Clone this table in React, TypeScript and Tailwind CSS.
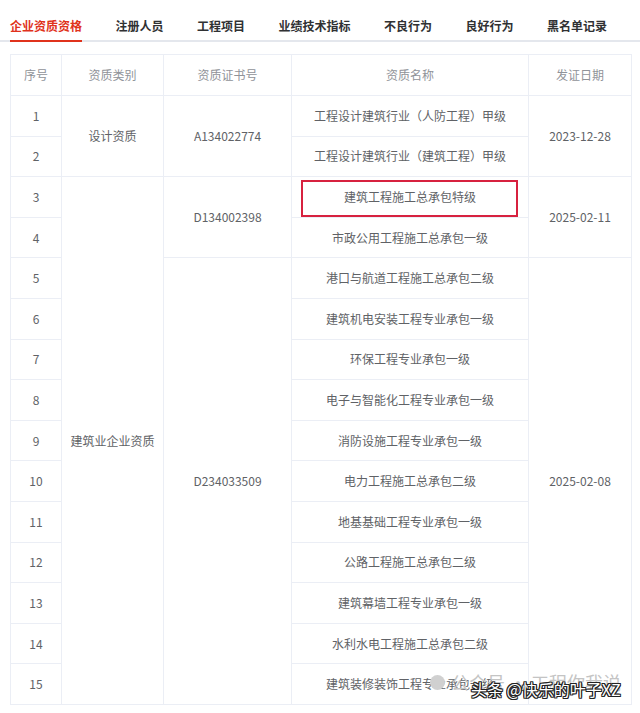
const tabs = ['企业资质资格', '注册人员', '工程项目', '业绩技术指标', '不良行为', '良好行为', '黑名单记录'];

const names = [
  '工程设计建筑行业（人防工程）甲级',
  '工程设计建筑行业（建筑工程）甲级',
  '建筑工程施工总承包特级',
  '市政公用工程施工总承包一级',
  '港口与航道工程施工总承包二级',
  '建筑机电安装工程专业承包一级',
  '环保工程专业承包一级',
  '电子与智能化工程专业承包一级',
  '消防设施工程专业承包一级',
  '电力工程施工总承包二级',
  '地基基础工程专业承包一级',
  '公路工程施工总承包二级',
  '建筑幕墙工程专业承包一级',
  '水利水电工程施工总承包二级',
  '建筑装修装饰工程专业承包一级',
];

const cell = 'border border-[#ebeef5] text-center align-middle';

export default function App() {
  return (
    <div
      className="relative h-[713px] w-[640px] overflow-hidden bg-white"
      style={{ fontFamily: '"Noto Sans CJK SC", "Noto Sans", sans-serif' }}
    >
      <div className="flex border-b-2 border-[#e4e7ed] pl-[10px]">
        <div className="flex gap-[33.5px] -mb-[2px]">
          {tabs.map((t, i) => (
            <div
              key={t}
              className={`border-b-2 pt-[18px] pb-[6px] text-[12px] leading-[16px] font-semibold ${
                i === 0 ? 'border-[#e0321c] text-[#e0321c]' : 'border-transparent text-[#303133]'
              }`}
            >
              {t}
            </div>
          ))}
        </div>
      </div>

      <table className="mt-[12px] ml-[10px] w-[621px] table-fixed border-collapse text-[12px] text-[#606266]">
        <colgroup>
          <col className="w-[51px]" />
          <col className="w-[102px]" />
          <col className="w-[128px]" />
          <col className="w-[237px]" />
          <col className="w-[103px]" />
        </colgroup>
        <thead>
          <tr className="h-[41px] text-[12px] text-[#909399]">
            <th className={`${cell} font-normal`}>序号</th>
            <th className={`${cell} font-normal`}>资质类别</th>
            <th className={`${cell} font-normal`}>资质证书号</th>
            <th className={`${cell} font-normal`}>资质名称</th>
            <th className={`${cell} font-normal`}>发证日期</th>
          </tr>
        </thead>
        <tbody>
          {names.map((name, i) => (
            <tr key={name} className="h-[40.6px]">
              <td className={cell}>{i + 1}</td>
              {i === 0 && (
                <td rowSpan={2} className={cell}>
                  设计资质
                </td>
              )}
              {i === 2 && (
                <td rowSpan={13} className={cell}>
                  建筑业企业资质
                </td>
              )}
              {i === 0 && (
                <td rowSpan={2} className={cell}>
                  A134022774
                </td>
              )}
              {i === 2 && (
                <td rowSpan={2} className={cell}>
                  D134002398
                </td>
              )}
              {i === 4 && (
                <td rowSpan={11} className={cell}>
                  D234033509
                </td>
              )}
              <td className={`${cell} relative`}>
                {name}
                {i === 2 && (
                  <span className="absolute top-[3px] right-[10px] bottom-0 left-[9px] border-2 border-[#d7213f]" />
                )}
              </td>
              {i === 0 && (
                <td rowSpan={2} className={cell}>
                  2023-12-28
                </td>
              )}
              {i === 2 && (
                <td rowSpan={2} className={cell}>
                  2025-02-11
                </td>
              )}
              {i === 4 && (
                <td rowSpan={11} className={cell}>
                  2025-02-08
                </td>
              )}
            </tr>
          ))}
        </tbody>
      </table>

      {/* faint source watermark */}
      <div className="absolute top-[670px] left-[430px] flex items-center gap-[6px] text-[18px] leading-[24px] text-[#c4c4c4]">
        <span className="h-[15px] w-[15px] rounded-full bg-[#d0d0d0]" />
        <span>公众号 · 工程你我说</span>
      </div>

      {/* toutiao watermark */}
      <div className="absolute top-[678px] left-[471px] text-[16px] leading-[22px] text-white [text-shadow:1px_1px_0_#222,-1px_-1px_0_#222,1px_-1px_0_#222,-1px_1px_0_#222,0_1px_0_#222,0_-1px_0_#222,1px_0_0_#222,-1px_0_0_#222]">
        头条 @快乐的叶子XZ
      </div>
    </div>
  );
}
